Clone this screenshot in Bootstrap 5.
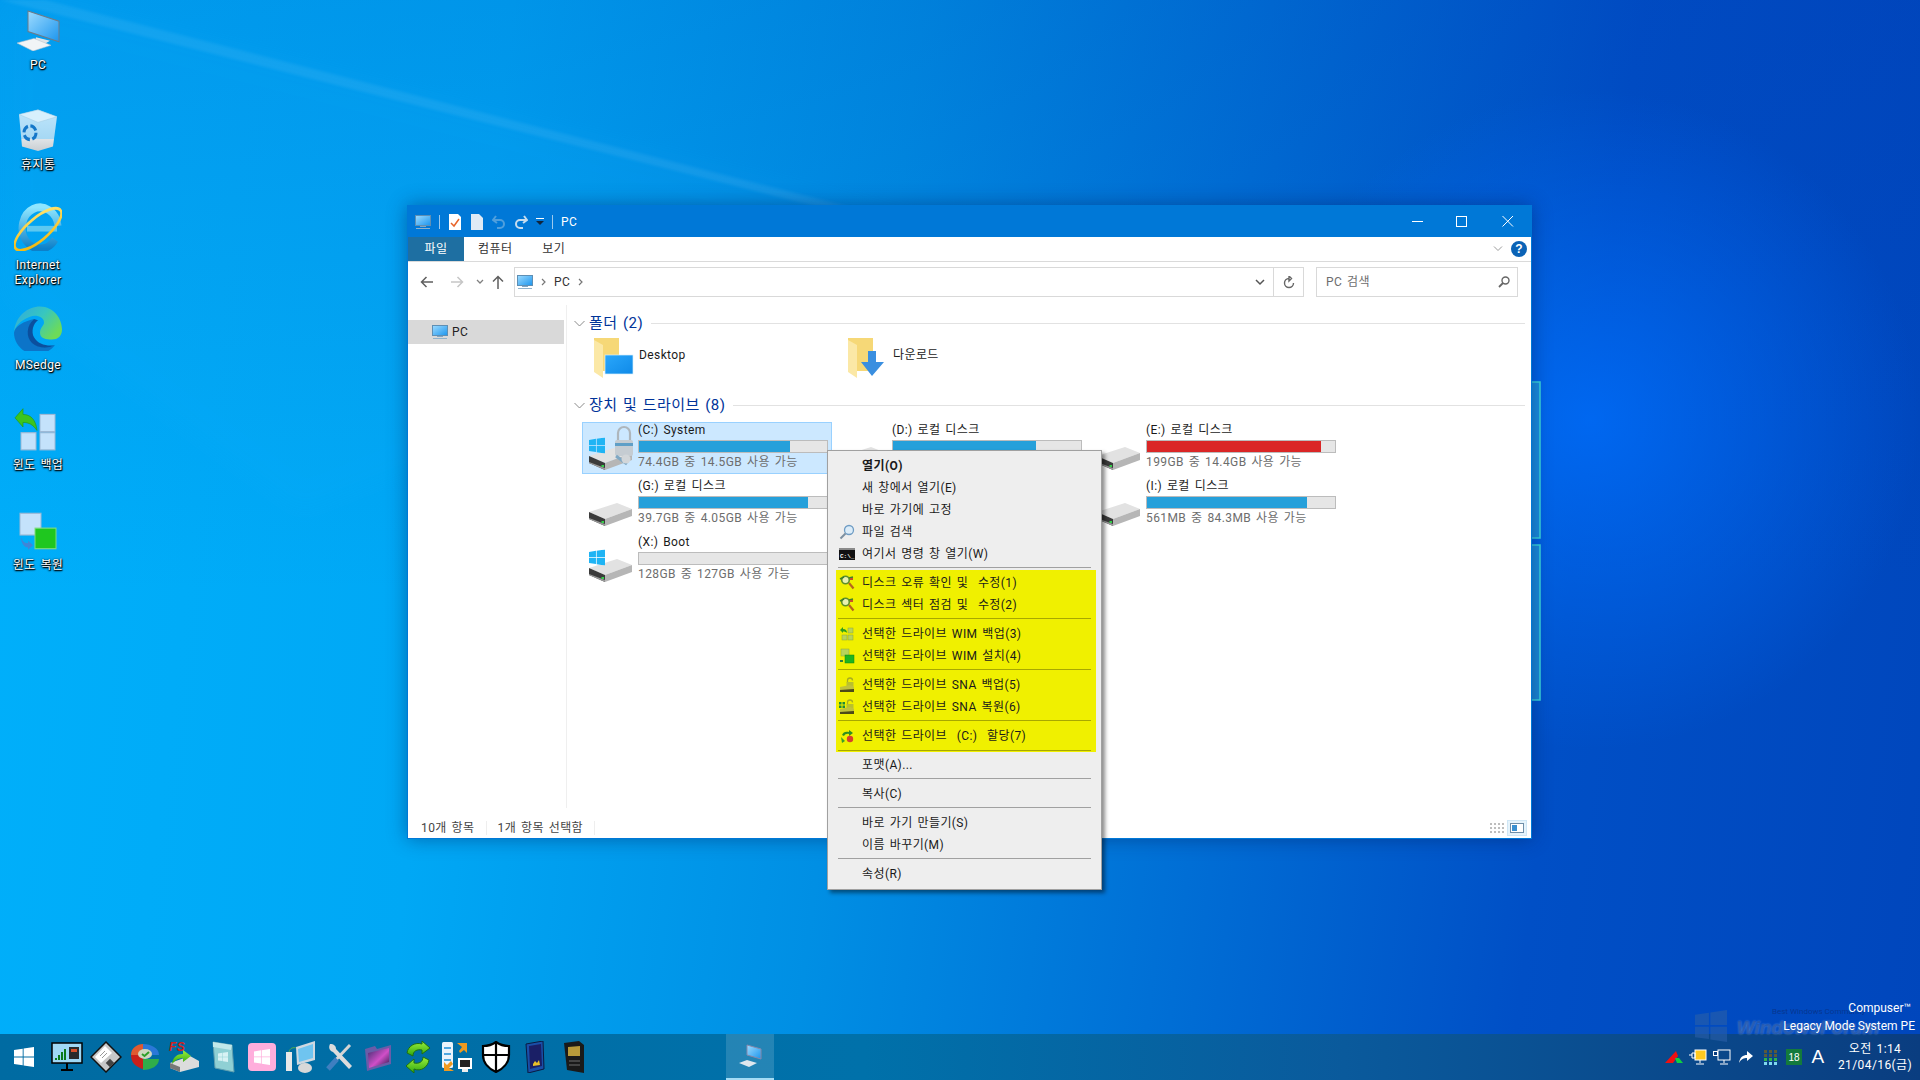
<!DOCTYPE html>
<html lang="ko">
<head>
  <meta charset="UTF-8" />
  <title>PC</title>
  <link href="https://cdn.jsdelivr.net/npm/bootstrap@5.3.3/dist/css/bootstrap.min.css" rel="stylesheet" />
  <style>
    html, body { margin: 0; width: 1920px; height: 1080px; overflow: hidden; }
    body {
      font-family: Roboto, "Noto Sans CJK KR", sans-serif;
      font-size: 12px;
      line-height: 16px;
      letter-spacing: .4px;
      word-spacing: 1.5px;
      color: #1a1a1a;
      background:
        radial-gradient(circle 330px at 1590px 420px, rgba(0,112,255,.75), rgba(0,100,240,0)),
        linear-gradient(180deg, rgba(0,50,170,.16), rgba(0,50,170,0) 55%),
        linear-gradient(97deg, #00b0fb 0%, #00a8f5 25%, #008fe4 45%, #0070d6 62%, #004fc6 80%, #0046bc 100%);
    }
    .svg-defs { position: absolute; width: 0; height: 0; }
    .screen { width: 1920px; height: 1080px; }
    .desk-area { position: relative; }
    .wall-art { position: absolute; left: 0; top: 0; }

    .desk-icons { position: relative; width: 76px; padding-top: 3px; }
    .desk-item { height: 100px; color: #fff; text-align: center; line-height: 15px; text-shadow: 0 1px 2px #000, 1px 1px 1px #000, 0 0 2px rgba(0,0,0,.7); }
    .desk-item svg { display: block; margin: 0 auto 7px; }

    .win-frame { position: absolute; left: 407px; top: 205px; width: 1125px; height: 634px; background: #fff; border: 1px solid #0078d7; border-top: 0; box-shadow: 0 0 18px rgba(0,30,90,.45); }
    .title-bar { height: 32px; background: #0078d7; color: #fff; padding: 1px 0 0 7px; }
    .title-sep { width: 1px; height: 14px; background: #9cc9ee; }
    .win-btn { position: absolute; top: 8px; }
    .ribbon-tabs { height: 25px; border-bottom: 1px solid #dadada; }
    .rtab { height: 24px; line-height: 24px; color: #333; }
    .rtab-file { width: 56px; background: #1e6fa2; color: #fff; text-align: center; }
    .rtab-pc { margin-left: 14px; }
    .rtab-view { margin-left: 30px; }
    .addr-row { height: 43px; padding: 5px 13px 8px 0; }
    .nav-arrows { width: 106px; padding-left: 12px; }
    .addr-box { height: 30px; border: 1px solid #d9d9d9; color: #333; padding-left: 2px; }
    .addr-refresh { width: 30px; height: 100%; border-left: 1px solid #d9d9d9; }
    .search-box { width: 202px; height: 30px; margin-left: 12px; border: 1px solid #d9d9d9; color: #6d6d6d; padding: 0 7px 0 9px; }
    .tree-pane { width: 159px; padding: 15px 2px 0 0; border-right: 1px solid #efefef; margin-bottom: 6px; }
    .tree-row { height: 24px; background: #d9d9d9; padding-left: 24px; color: #222; }
    .list-pane { padding: 6px 6px 0 7px; }
    .grp-head { height: 24px; color: #003399; font-size: 15px; }
    .grp-line { height: 1px; background: #e2e2e2; }
    .tile-grid { display: grid; grid-template-columns: repeat(3, 250px); column-gap: 4px; margin-left: 8px; }
    .folder-grid { height: 58px; padding-top: 3px; }
    .drive-grid { row-gap: 4px; padding-top: 5px; }
    .folder-tile { padding-left: 11px; }
    .folder-tile span { margin: 9px 0 0 4px; }
    .drive-tile { height: 52px; border: 1px solid transparent; padding-left: 4px; }
    .drive-tile.is-sel { background: #cce8ff; border-color: #99d1ff; }
    .drive-text { width: 190px; margin: -1px 0 0 3px; }
    .drive-name { height: 17px; line-height: 17px; margin-bottom: 1px; white-space: nowrap; }
    .drive-sub { color: #6d6d6d; line-height: 16px; margin-top: 1px; white-space: nowrap; }
    .progress.drive-bar { height: 13px; background: #e6e6e6; border: 1px solid #bcbcbc; border-radius: 0; }
    .drive-bar .progress-bar { background: #26a0da; }
    .drive-bar .progress-bar.is-full { background: #da2626; }
    .status-row { height: 24px; color: #444; padding: 3px 4px 0 13px; }
    .status-sep { width: 1px; height: 14px; background: #eee; margin: 0 11px; }
    .view-ico { padding: 2px; border: 1px solid transparent; }
    .view-ico.is-on { background: #e5f3fb; border-color: #cfe6f5; }

    .dropdown-menu.ctx-menu { display: block; position: absolute; left: 827px; top: 450px; width: 275px; min-width: 0; height: 440px; margin: 0; padding: 3px 5px 5px 8px; background: #eeeeee; border: 1px solid #a0a0a0; border-radius: 0; box-shadow: 3px 3px 4px rgba(0,0,0,.45); font-size: 12px; color: #1a1a1a; }
    .ctx-menu .dropdown-item { height: 22px; padding: 1px 0 0 3px; gap: 7px; color: #1a1a1a; }
    .ctx-menu .dropdown-item.no-ico { padding-left: 26px; }
    .ctx-sep { height: 7px; padding: 3px 5px 0 2px; }
    .ctx-sep i { display: block; height: 1px; background: #a0a0a0; }
    .ctx-group { background: #f0f000; margin: -1px 0 1px; padding-top: 1px; }
    .ctx-group .ctx-sep i { background: #a8a800; }
    .ctx-group .ctx-sep:last-child { height: 6px; padding-top: 4px; }

    .water-mark { position: absolute; z-index: 5; left: 1680px; top: 1000px; width: 240px; height: 40px; letter-spacing: 0; word-spacing: 0; }
    .water-txt { position: absolute; right: 5px; color: #fff; white-space: nowrap; }
    .water-top { top: 0; right: 9px; }
    .water-bot { top: 18px; }
    .water-name { position: absolute; left: 57px; top: 17px; font: italic 700 19px "Liberation Sans", sans-serif; color: rgba(25,70,150,.55); white-space: nowrap; text-shadow: 0 0 2px rgba(180,220,255,.45); }
    .water-small { position: absolute; left: 92px; top: 7px; font-size: 8px; line-height: 10px; color: rgba(10,40,110,.6); white-space: nowrap; }
    .water-logo { position: absolute; left: 15px; top: 10px; }

    .task-bar { position: relative; z-index: 1; height: 46px; padding-left: 4px; background: linear-gradient(90deg, #006ba2 0%, #0071aa 45%, #0a5a9c 70%, #0a3d80 100%); }
    .task-btn { width: 39px; height: 46px; }
    .task-start { margin-right: 4px; }
    .task-active { width: 48px; margin-left: 133px; background: rgba(255,255,255,.14); border-bottom: 2px solid #a5dcf5; }
    .tray-ico { width: 24px; height: 46px; color: #fff; }
    .tray-ime { font-size: 19px; font-family: "Liberation Sans", sans-serif; }
    .tray-clock { width: 90px; color: #fff; text-align: center; line-height: 16px; white-space: nowrap; }
  </style>
</head>
<body>
  <svg class="svg-defs">
    <defs>
      <linearGradient id="gScreen" x1="0" y1="0" x2="1" y2="1"><stop offset="0" stop-color="#9fdcff"/><stop offset="1" stop-color="#1b95ee"/></linearGradient>
      <linearGradient id="gBin" x1="0" y1="0" x2="0" y2="1"><stop offset="0" stop-color="#bfe6fb"/><stop offset=".7" stop-color="#a6d8f4"/><stop offset=".72" stop-color="#dfe3e6"/><stop offset="1" stop-color="#c9ced2"/></linearGradient>
      <linearGradient id="gIe" x1="0" y1="0" x2="0" y2="1"><stop offset="0" stop-color="#8fe6ff"/><stop offset="1" stop-color="#0d80c9"/></linearGradient>
      <linearGradient id="gRing" x1="0" y1="1" x2="1" y2="0"><stop offset="0" stop-color="#f4b400"/><stop offset="1" stop-color="#ffe676"/></linearGradient>
      <linearGradient id="gEdge" x1="0" y1="0" x2="1" y2=".6"><stop offset="0" stop-color="#2fa8e0"/><stop offset=".55" stop-color="#37c6c0"/><stop offset="1" stop-color="#6ddb58"/></linearGradient>
      <linearGradient id="gFolderBlue" x1="0" y1="0" x2="1" y2="1"><stop offset="0" stop-color="#2aa7fb"/><stop offset="1" stop-color="#0f8ae8"/></linearGradient>
      <linearGradient id="gPurple" x1="0" y1="0" x2="1" y2="1"><stop offset="0" stop-color="#3c2d6e"/><stop offset=".55" stop-color="#d04fc8"/><stop offset="1" stop-color="#241a46"/></linearGradient>
      <linearGradient id="gGreen" x1="0" y1="0" x2="0" y2="1"><stop offset="0" stop-color="#9cf03c"/><stop offset="1" stop-color="#2fa80f"/></linearGradient>
      <filter id="fBlur"><feGaussianBlur stdDeviation="1.4"/></filter>
      <filter id="fBlur2"><feGaussianBlur stdDeviation="14"/></filter>

      <symbol id="ico-win" viewBox="0 0 20 20"><path d="M0 3 8.7 1.7V9.4H0zM9.6 1.6 20 0V9.4H9.6zM0 10.4H8.7V18.2L0 17zM9.6 10.4H20V20L9.6 18.4z"/></symbol>
      <symbol id="ico-pc" viewBox="0 0 16 16"><rect x=".5" y="1.5" width="15" height="10" fill="url(#gScreen)" stroke="#5f8fb4"/><rect x="5" y="12" width="6" height="1" fill="#7fa6c4"/><rect x="1" y="14" width="14" height="1" fill="#8fb2cc"/></symbol>
      <symbol id="ico-hdd" viewBox="0 0 48 48"><polygon points="2,33 30,24 45,30 18,40" fill="#e2e2e2"/><polygon points="18,40 45,30 45,37 18,47" fill="#b6b6b6"/><polygon points="2,33 18,40 18,47 2,40" fill="#3b3b3b"/><polygon points="2,39 18,45 18,47 2,40" fill="#9a9a9a"/><rect x="14.500" y="42" width="2.500" height="2" fill="#35d04a"/></symbol>
      <symbol id="ico-flag" viewBox="0 0 20 20"><use href="#ico-win" fill="#1fb4f4"/></symbol>
      <symbol id="ico-folder" viewBox="0 0 42 42"><polygon points="1,0 26,0 26,33 1,33" fill="#f6d877"/><polygon points="1,2 10,7 10,40 1,34" fill="#fbe8a6"/></symbol>
      <symbol id="ico-scan" viewBox="0 0 16 16"><circle cx="6.500" cy="5" r="3.800" fill="#e8f0b0" stroke="#5d8f2a" stroke-width="1.600"/><path d="M1 4 5 2M10 3l4-1" stroke="#3d7f2a" stroke-width="1.500"/><path d="M10 8l4.500 5.500" stroke="#b5651d" stroke-width="2.200"/><rect x="11" y="3" width="3" height="2" fill="#c8502a"/></symbol>
      <symbol id="ico-lockhdd" viewBox="0 0 16 16"><path d="M8.500 6V3.500a2.500 2.500 0 0 1 5 0" fill="none" stroke="#a8ad20" stroke-width="1.300"/><rect x="7.500" y="5" width="7" height="4" fill="#b9c12c"/><polygon points="1,10 11,8 15,9.500 15,13 1,15" fill="#c0c23c"/><polygon points="1,13 15,12 15,15 1,15" fill="#4c4a18"/></symbol>
    </defs>
  </svg>

  <div class="screen d-flex flex-column">
    <div class="desk-area flex-grow-1">
      <svg class="wall-art" width="1920" height="1034">
        <polygon points="45,0 880,215 850,215 0,0" fill="#fff" opacity=".07" filter="url(#fBlur)"/>
        <polygon points="0,0 60,0 1000,240 300,520 0,300" fill="#26b8ff" opacity=".06" filter="url(#fBlur2)"/>
        <polygon points="1531,382 1540,382 1540,538 1531,538" fill="#2aa3d8" opacity=".65"/>
        <polygon points="1531,545 1540,545 1540,700 1531,700" fill="#2aa3d8" opacity=".65"/>
        <path d="M1531 382H1540V538H1531M1531 545H1540V700H1531" fill="none" stroke="#39d4dc" stroke-width="1.600"/>
      </svg>

      <div class="desk-icons d-flex flex-column">
        <div class="desk-item">
          <svg width="48" height="48" viewBox="14 3 48 42" preserveAspectRatio="none"><polygon points="28,10 59,19 59,37 28,28" fill="url(#gScreen)" stroke="#6d7b88"/><polygon points="36,33 50,36 44,39 35,36" fill="#dfe5ea"/><polygon points="17,38 34,34 51,40 33,45" fill="#f1f4f6" stroke="#b8c2ca" stroke-width=".5"/></svg>
          PC
        </div>
        <div class="desk-item">
          <svg width="48" height="48" viewBox="14 90 48 42" preserveAspectRatio="none"><polygon points="19,100 38,96 57,102 53,128 38,132 22,128" fill="url(#gBin)"/><polygon points="19,100 38,96 57,102 38,107" fill="#d7f0fd" stroke="#9fcbe3" stroke-width=".5"/><circle cx="30" cy="116" r="6" fill="none" stroke="#1477c9" stroke-width="3" stroke-dasharray="7 2.500"/></svg>
          휴지통
        </div>
        <div class="desk-item">
          <svg width="48" height="48" viewBox="14 177 48 42" preserveAspectRatio="none"><path d="M55 209A18 18 0 1 1 58 197" fill="none" stroke="url(#gIe)" stroke-width="7"/><rect x="27" y="197" width="30" height="5" fill="#5dc8f0"/><ellipse cx="38" cy="200" rx="28" ry="10" transform="rotate(-36 38 200)" fill="none" stroke="url(#gRing)" stroke-width="2.500"/></svg>
          Internet<br />Explorer
        </div>
        <div class="desk-item">
          <svg width="48" height="48" viewBox="14 264 48 42" preserveAspectRatio="none"><path d="M14 290C15 275 28 267 40 267C54 267 62 278 62 287C62 293 58 296 52 296C46 296 40 295 40 290C40 285 44 284 44 281C44 276 36 274 30 276C20 279 15 285 14 290Z" fill="url(#gEdge)"/><path d="M14 290C14 300 24 309 36 309C44 309 50 306 55 301C48 304 38 304 32 298C26 292 28 283 34 278C24 280 15 284 14 290Z" fill="#0c74c8"/><path d="M34 278C26 284 26 294 32 299C38 304 48 304 55 301C46 302 38 300 34 294C31 289 33 282 38 279Z" fill="#0b4f9e"/></svg>
          MSedge
        </div>
        <div class="desk-item">
          <svg width="48" height="48" viewBox="14 351 48 42" preserveAspectRatio="none"><g fill="#c4e2fb" stroke="#9db9d6"><rect x="40" y="361" width="15" height="15"/><rect x="21" y="377" width="15" height="15"/><rect x="40" y="377" width="15" height="15"/></g><path d="M15 364 23 356V361C31 361 36 366 37 375C33 370 29 368 23 368V372Z" fill="#3cc51e" stroke="#1f9a10" stroke-width=".6"/></svg>
          윈도 백업
        </div>
        <div class="desk-item">
          <svg width="48" height="48" viewBox="14 438 48 42" preserveAspectRatio="none"><rect x="20" y="447" width="21" height="19" fill="#c4e2fb" stroke="#9db9d6"/><rect x="35" y="460" width="21" height="18" fill="#1fc71f" stroke="#7fdc7f"/><path d="M21 468C23 473 26 473 28 473V471L33 475 28 479V477C25 477 21 474 21 468Z" fill="#3f86d8"/></svg>
          윈도 복원
        </div>
      </div>

      <div class="water-mark">
        <svg class="water-logo" width="32" height="32" viewBox="0 0 20 20"><use href="#ico-win" width="20" height="20" fill="#2a5fa8" opacity=".6"/></svg>
        <div class="water-small">Best Windows Community</div>
        <div class="water-name">WindowsForum</div>
        <div class="water-txt water-top">Compuser™</div>
        <div class="water-txt water-bot">Legacy Mode System PE</div>
      </div>

      <div class="win-frame d-flex flex-column">
        <div class="title-bar d-flex align-items-center gap-2 flex-shrink-0">
          <svg width="16" height="16"><use href="#ico-pc"/></svg>
          <span class="title-sep"></span>
          <svg width="14" height="16" viewBox="0 0 14 16"><path d="M1 0H10L13 3V16H1z" fill="#fff"/><path d="M3 9 6 12 11 5" fill="none" stroke="#e8642a" stroke-width="1.500"/></svg>
          <svg width="14" height="16" viewBox="0 0 14 16"><path d="M1 0H9L13 4V16H1z" fill="#dfeaf5"/></svg>
          <svg width="14" height="14" viewBox="0 0 14 14"><path d="M4 1 1 5 5 8M1.500 5H8a4 4 0 0 1 0 8H5" fill="none" stroke="#4f9fdd" stroke-width="2"/></svg>
          <svg width="14" height="14" viewBox="0 0 14 14"><path d="M10 1 13 5 9 8M12.500 5H6a4 4 0 0 0 0 8H9" fill="none" stroke="#c6dcee" stroke-width="2"/></svg>
          <svg width="8" height="8" viewBox="0 0 8 8"><rect y="0" width="8" height="1" fill="#fff"/><path d="M0 3H8L4 7z" fill="#10243c"/></svg>
          <span class="title-sep"></span>
          <span>PC</span>
          <svg class="win-btn" style="left:1004px" width="12" height="16" viewBox="0 0 12 16"><rect y="8" width="11" height="1" fill="#fff"/></svg>
          <svg class="win-btn" style="left:1048px" width="12" height="16" viewBox="0 0 12 16"><rect x=".5" y="3.500" width="10" height="10" fill="none" stroke="#fff"/></svg>
          <svg class="win-btn" style="left:1094px" width="12" height="16" viewBox="0 0 12 16"><path d="M.5 3 11 13.500M11 3 .5 13.500" stroke="#fff"/></svg>
        </div>

        <div class="ribbon-tabs d-flex flex-shrink-0 position-relative">
          <div class="rtab rtab-file">파일</div>
          <div class="rtab rtab-pc">컴퓨터</div>
          <div class="rtab rtab-view">보기</div>
          <div class="ms-auto d-flex align-items-center gap-2 pe-1">
            <svg width="10" height="6" viewBox="0 0 10 6"><path d="M1 .5 5 4.500 9 .5" fill="none" stroke="#9a9a9a"/></svg>
            <svg width="16" height="16" viewBox="0 0 16 16"><circle cx="8" cy="8" r="8" fill="#0b63b6"/><text x="8" y="12" text-anchor="middle" font-family="Liberation Sans" font-weight="700" font-size="12" fill="#fff">?</text></svg>
          </div>
        </div>

        <div class="addr-row d-flex flex-shrink-0">
          <div class="nav-arrows d-flex align-items-center">
            <svg width="14" height="12" viewBox="0 0 14 12"><path d="M13 6H2M6.500 1 1.500 6 6.500 11" fill="none" stroke="#5f5f5f" stroke-width="1.500"/></svg>
            <svg class="ms-3" width="14" height="12" viewBox="0 0 14 12"><path d="M1 6H12M7.500 1 12.500 6 7.500 11" fill="none" stroke="#c6c6c6" stroke-width="1.500"/></svg>
            <svg class="ms-2 ps-1" width="12" height="6" viewBox="0 0 8 6"><path d="M1 1 4 4 7 1" fill="none" stroke="#808080" stroke-width="1.300"/></svg>
            <svg class="ms-2" width="12" height="14" viewBox="0 0 12 14"><path d="M6 14V2M1 6.500 6 1.500 11 6.500" fill="none" stroke="#5f5f5f" stroke-width="1.500"/></svg>
          </div>
          <div class="addr-box flex-grow-1 d-flex align-items-center">
            <svg width="16" height="16"><use href="#ico-pc"/></svg>
            <svg class="ms-2" width="5" height="8" viewBox="0 0 5 8"><path d="M1 1 4 4 1 7" fill="none" stroke="#777" stroke-width="1.200"/></svg>
            <span class="ms-2">PC</span>
            <svg class="ms-2" width="5" height="8" viewBox="0 0 5 8"><path d="M1 1 4 4 1 7" fill="none" stroke="#777" stroke-width="1.200"/></svg>
            <svg class="ms-auto me-2" width="10" height="7" viewBox="0 0 10 7"><path d="M1 1 5 5 9 1" fill="none" stroke="#555" stroke-width="1.500"/></svg>
            <div class="addr-refresh d-flex align-items-center justify-content-center">
              <svg width="12" height="13" viewBox="0 0 12 13"><path d="M6 2.500A4.500 4.500 0 1 0 10.500 7M6 0V5L8.500 2.500z" fill="none" stroke="#666" stroke-width="1.400"/></svg>
            </div>
          </div>
          <div class="search-box d-flex align-items-center justify-content-between">
            <span>PC 검색</span>
            <svg width="12" height="12" viewBox="0 0 12 12"><circle cx="7.500" cy="4.500" r="3.500" fill="none" stroke="#666" stroke-width="1.400"/><path d="M5 7 1 11" stroke="#666" stroke-width="1.800"/></svg>
          </div>
        </div>

        <div class="flex-grow-1 d-flex">
          <div class="tree-pane flex-shrink-0">
            <div class="tree-row d-flex align-items-center gap-1">
              <svg width="16" height="16"><use href="#ico-pc"/></svg><span>PC</span>
            </div>
          </div>
          <div class="list-pane flex-grow-1">
            <div class="grp-head d-flex align-items-center">
              <svg width="11" height="7" viewBox="0 0 11 7"><path d="M.5 1 5.500 6 10.500 1" fill="none" stroke="#8a8a8a"/></svg>
              <span class="ms-1 me-2">폴더 (2)</span>
              <div class="grp-line flex-grow-1"></div>
            </div>
            <div class="tile-grid folder-grid">
              <div class="folder-tile d-flex">
                <svg width="42" height="42" viewBox="0 0 42 42"><use href="#ico-folder" width="42" height="42"/><rect x="12" y="17" width="28" height="19" fill="url(#gFolderBlue)" stroke="#d8effc" stroke-width=".7"/></svg>
                <span>Desktop</span>
              </div>
              <div class="folder-tile d-flex">
                <svg width="42" height="42" viewBox="0 0 42 42"><use href="#ico-folder" width="42" height="42"/><path d="M21 13H29V24H37L25 38 14 24H21z" fill="#3a8fe0"/></svg>
                <span>다운로드</span>
              </div>
            </div>

            <div class="grp-head d-flex align-items-center">
              <svg width="11" height="7" viewBox="0 0 11 7"><path d="M.5 1 5.500 6 10.500 1" fill="none" stroke="#8a8a8a"/></svg>
              <span class="ms-1 me-2">장치 및 드라이브 (8)</span>
              <div class="grp-line flex-grow-1"></div>
            </div>
            <div class="tile-grid drive-grid">
              <div class="drive-tile is-sel d-flex">
                <svg width="48" height="48" viewBox="0 0 48 48"><use href="#ico-hdd" width="48" height="48"/><use href="#ico-flag" x="2" y="14" width="16" height="17"/><path d="M31 20V10a6 6 0 0 1 12 0V20" fill="none" stroke="#aeb6bc" stroke-width="2.200"/><rect x="28" y="17" width="18" height="16" rx="2" fill="#c5ccd2"/><rect x="28" y="20" width="18" height="3" fill="#5f9fc7"/><path d="M29 33 40 41" stroke="#7fa8c4" stroke-width="3"/><circle cx="39" cy="36" r="4.500" fill="#d2d6d9"/></svg>
                <div class="drive-text">
                  <div class="drive-name">(C:) System</div>
                  <div class="progress drive-bar"><div class="progress-bar" style="width:80.5%"></div></div>
                  <div class="drive-sub">74.4GB 중 14.5GB 사용 가능</div>
                </div>
              </div>
              <div class="drive-tile d-flex">
                <svg width="48" height="48"><use href="#ico-hdd" width="48" height="48"/></svg>
                <div class="drive-text">
                  <div class="drive-name">(D:) 로컬 디스크</div>
                  <div class="progress drive-bar"><div class="progress-bar" style="width:76%"></div></div>
                </div>
              </div>
              <div class="drive-tile d-flex">
                <svg width="48" height="48"><use href="#ico-hdd" width="48" height="48"/></svg>
                <div class="drive-text">
                  <div class="drive-name">(E:) 로컬 디스크</div>
                  <div class="progress drive-bar"><div class="progress-bar is-full" style="width:92.8%"></div></div>
                  <div class="drive-sub">199GB 중 14.4GB 사용 가능</div>
                </div>
              </div>
              <div class="drive-tile d-flex">
                <svg width="48" height="48"><use href="#ico-hdd" width="48" height="48"/></svg>
                <div class="drive-text">
                  <div class="drive-name">(G:) 로컬 디스크</div>
                  <div class="progress drive-bar"><div class="progress-bar" style="width:89.8%"></div></div>
                  <div class="drive-sub">39.7GB 중 4.05GB 사용 가능</div>
                </div>
              </div>
              <div class="drive-tile d-flex">
                <svg width="48" height="48"><use href="#ico-hdd" width="48" height="48"/></svg>
              </div>
              <div class="drive-tile d-flex">
                <svg width="48" height="48"><use href="#ico-hdd" width="48" height="48"/></svg>
                <div class="drive-text">
                  <div class="drive-name">(I:) 로컬 디스크</div>
                  <div class="progress drive-bar"><div class="progress-bar" style="width:85%"></div></div>
                  <div class="drive-sub">561MB 중 84.3MB 사용 가능</div>
                </div>
              </div>
              <div class="drive-tile d-flex">
                <svg width="48" height="48" viewBox="0 0 48 48"><use href="#ico-hdd" width="48" height="48"/><use href="#ico-flag" x="2" y="14" width="16" height="17"/></svg>
                <div class="drive-text">
                  <div class="drive-name">(X:) Boot</div>
                  <div class="progress drive-bar"></div>
                  <div class="drive-sub">128GB 중 127GB 사용 가능</div>
                </div>
              </div>
            </div>
          </div>
        </div>

        <div class="status-row d-flex align-items-center flex-shrink-0">
          <span>10개 항목</span><span class="status-sep"></span>
          <span>1개 항목 선택함</span><span class="status-sep"></span>
          <div class="ms-auto d-flex align-items-center">
            <span class="view-ico d-flex"><svg width="14" height="10" viewBox="0 0 14 10"><path d="M0 1H2M4 1H6M8 1H10M12 1H14M0 5H2M4 5H6M8 5H10M12 5H14M0 9H2M4 9H6M8 9H10M12 9H14" stroke="#7c7c7c"/></svg></span>
            <span class="view-ico is-on d-flex"><svg width="14" height="10" viewBox="0 0 14 10"><rect x=".5" y=".5" width="13" height="9" fill="#fff" stroke="#6f8ea8"/><rect x="2" y="2" width="5" height="6" fill="#3a8fd0"/></svg></span>
          </div>
        </div>
      </div>

      <div class="dropdown-menu show ctx-menu">
        <a class="dropdown-item no-ico d-flex align-items-center fw-bold">열기(O)</a>
        <a class="dropdown-item no-ico d-flex align-items-center">새 창에서 열기(E)</a>
        <a class="dropdown-item no-ico d-flex align-items-center">바로 가기에 고정</a>
        <a class="dropdown-item d-flex align-items-center">
          <svg width="16" height="16" viewBox="0 0 16 16"><circle cx="10" cy="6" r="4.500" fill="#dcecf8" stroke="#6e9cc4" stroke-width="1.300"/><path d="M6.500 9.500 1.500 14.500" stroke="#7d8fa0" stroke-width="2"/></svg>
          <span>파일 검색</span>
        </a>
        <a class="dropdown-item d-flex align-items-center">
          <svg width="16" height="16" viewBox="0 0 16 16"><rect y="2" width="16" height="12" fill="#111"/><rect y="2" width="16" height="2" fill="#8a8a8a"/><text x="1" y="12" font-family="Liberation Mono" font-size="6" font-weight="700" letter-spacing="0" fill="#fff">C:\_</text></svg>
          <span>여기서 명령 창 열기(W)</span>
        </a>
        <div class="ctx-sep"><i></i></div>
        <div class="ctx-group">
          <a class="dropdown-item d-flex align-items-center"><svg width="16" height="16"><use href="#ico-scan"/></svg><span>디스크 오류 확인 및&nbsp; 수정(1)</span></a>
          <a class="dropdown-item d-flex align-items-center"><svg width="16" height="16"><use href="#ico-scan"/></svg><span>디스크 섹터 점검 및&nbsp; 수정(2)</span></a>
          <div class="ctx-sep"><i></i></div>
          <a class="dropdown-item d-flex align-items-center">
            <svg width="16" height="16" viewBox="0 0 16 16"><g fill="#b8d45a" stroke="#8aa53a" stroke-width=".5"><rect x="9" y="2" width="5" height="5"/><rect x="3" y="9" width="5" height="5"/><rect x="9" y="9" width="5" height="5"/></g><path d="M1 4 4 1V3C7 3 8 5 8 7C7 6 6 5.500 4 5.500V7z" fill="#2f9f1f"/></svg>
            <span>선택한 드라이브 WIM 백업(3)</span>
          </a>
          <a class="dropdown-item d-flex align-items-center">
            <svg width="16" height="16" viewBox="0 0 16 16"><rect x="2" y="1" width="8" height="7" fill="#b8d45a" stroke="#8aa53a" stroke-width=".5"/><rect x="6" y="7" width="9" height="8" fill="#1fb51f" stroke="#0f8a0f" stroke-width=".5"/><rect x="1" y="12" width="3" height="2" fill="#2f7f3f"/></svg>
            <span>선택한 드라이브 WIM 설치(4)</span>
          </a>
          <div class="ctx-sep"><i></i></div>
          <a class="dropdown-item d-flex align-items-center"><svg width="16" height="16"><use href="#ico-lockhdd"/></svg><span>선택한 드라이브 SNA 백업(5)</span></a>
          <a class="dropdown-item d-flex align-items-center">
            <svg width="16" height="16" viewBox="0 0 16 16"><use href="#ico-lockhdd" width="16" height="16"/><g fill="#1f8a3a"><rect x="0" y="3" width="2.500" height="2.500"/><rect x="3.500" y="3" width="2.500" height="2.500"/><rect x="0" y="6.500" width="2.500" height="2.500"/><rect x="3.500" y="6.500" width="2.500" height="2.500"/></g></svg>
            <span>선택한 드라이브 SNA 복원(6)</span>
          </a>
          <div class="ctx-sep"><i></i></div>
          <a class="dropdown-item d-flex align-items-center">
            <svg width="16" height="16" viewBox="0 0 16 16"><path d="M3 7C4 4 7 3 10 4V2L14 5 10 8V6C8 5.500 6 6 5 8z" fill="#2f8f1f"/><circle cx="11" cy="11" r="3.200" fill="#d8402a"/><path d="M2 9 6 13 3 15z" fill="#3a9f2a"/></svg>
            <span>선택한 드라이브&nbsp; (C:)&nbsp; 할당(7)</span>
          </a>
          <div class="ctx-sep"><i></i></div>
        </div>
        <a class="dropdown-item no-ico d-flex align-items-center">포맷(A)...</a>
        <div class="ctx-sep"><i></i></div>
        <a class="dropdown-item no-ico d-flex align-items-center">복사(C)</a>
        <div class="ctx-sep"><i></i></div>
        <a class="dropdown-item no-ico d-flex align-items-center">바로 가기 만들기(S)</a>
        <a class="dropdown-item no-ico d-flex align-items-center">이름 바꾸기(M)</a>
        <div class="ctx-sep"><i></i></div>
        <a class="dropdown-item no-ico d-flex align-items-center">속성(R)</a>
      </div>
    </div>

    <div class="task-bar d-flex flex-shrink-0">
      <div class="task-btn task-start d-flex align-items-center justify-content-center"><svg width="20" height="20" fill="#fff"><use href="#ico-win"/></svg></div>
      <div class="task-btn d-flex align-items-center justify-content-center">
        <svg width="32" height="32" viewBox="0 0 32 32"><rect x="1" y="2" width="30" height="20" fill="#9fd8f5" stroke="#000" stroke-width="1.500"/><path d="M5 19V17M8 19V14M11 19V11M14 19V8" stroke="#0a7a1a" stroke-width="2"/><rect x="18" y="6" width="10" height="12" fill="#2a2a2a"/><rect x="20" y="8" width="6" height="3" fill="#d8502a"/><path d="M16 22V28M10 29H22" stroke="#000" stroke-width="2"/></svg>
      </div>
      <div class="task-btn d-flex align-items-center justify-content-center">
        <svg width="32" height="32" viewBox="0 0 32 32"><polygon points="16,1 31,16 16,31 1,16" fill="#c8c8c8" stroke="#111" stroke-width="1.500"/><polygon points="15,5 22,12 11,22 5,16" fill="#fff"/><path d="M10 15 15 10M12 17 17 12" stroke="#999"/><rect x="17" y="19" width="6" height="6" transform="rotate(45 20 22)" fill="#444"/></svg>
      </div>
      <div class="task-btn d-flex align-items-center justify-content-center">
        <svg width="32" height="32" viewBox="0 0 32 32"><path d="M2 14C2 7 8 3 14 3V14z" fill="#e05a30"/><path d="M14 3C22 3 30 7 30 14H14z" fill="#2a78d8"/><path d="M2 14H14V28C7 26 2 22 2 14z" fill="#c8201a"/><path d="M14 18H30C30 25 22 29 14 29z" fill="#2fae4a"/><ellipse cx="16" cy="13" rx="7" ry="5" fill="#cfd8c0"/><path d="M13 13 15.500 15 20 11" fill="none" stroke="#2f9f2a" stroke-width="2"/></svg>
      </div>
      <div class="task-btn d-flex align-items-center justify-content-center">
        <svg width="32" height="32" viewBox="0 0 32 32"><text x="1" y="10" font-family="Liberation Sans" font-weight="700" font-style="italic" font-size="12" fill="#d6201a">FS</text><polygon points="2,22 22,15 31,20 31,26 12,31 2,27" fill="#dcdcdc"/><polygon points="2,22 12,26 12,31 2,27" fill="#777"/><path d="M4 23C5 16 9 13 15 13V9L23 15 15 21V17C11 17 7 19 4 23z" fill="url(#gGreen)"/></svg>
      </div>
      <div class="task-btn d-flex align-items-center justify-content-center">
        <svg width="32" height="32" viewBox="0 0 32 32"><polygon points="6,1 25,4 27,31 8,27" fill="#8fd0d4" stroke="#5f9fb0"/><polygon points="6,1 25,4 24,9 6,6" fill="#c0e8ea"/><use href="#ico-win" x="11" y="11" width="10" height="10" fill="#d8f2f4"/></svg>
      </div>
      <div class="task-btn d-flex align-items-center justify-content-center">
        <svg width="30" height="30" viewBox="0 0 30 30"><rect width="28" height="28" x="1" y="1" rx="4" fill="#ffaedc"/><use href="#ico-win" x="7" y="7" width="16" height="16" fill="#fff"/></svg>
      </div>
      <div class="task-btn d-flex align-items-center justify-content-center">
        <svg width="32" height="32" viewBox="0 0 32 32"><rect x="1" y="11" width="6" height="19" fill="#e8e8e8"/><path d="M4 11C5 7 8 6 12 7" fill="none" stroke="#4fb04a"/><polygon points="11,6 30,0 30,19 12,24" fill="#cfd8e0"/><polygon points="13,8 28,3 28,17 14,21" fill="#6fc4f0"/><ellipse cx="20" cy="27" rx="7" ry="5" fill="#d8d8d8"/></svg>
      </div>
      <div class="task-btn d-flex align-items-center justify-content-center">
        <svg width="30" height="30" viewBox="0 0 30 30"><path d="M25 3 5 24" stroke="#d4d4d4" stroke-width="3"/><path d="M3 27 12 17" stroke="#3f7fc0" stroke-width="5"/><path d="M5 2C3 6 5 9 8 10L24 27 27 24 11 7C11 4 9 2 5 2z" fill="#dcdcdc"/></svg>
      </div>
      <div class="task-btn d-flex align-items-center justify-content-center">
        <svg width="32" height="32" viewBox="0 0 32 32"><polygon points="2,8 12,5 14,8 28,4 28,23 4,30" fill="#6a5ca8"/><polygon points="5,12 26,7 26,21 6,27" fill="url(#gPurple)"/></svg>
      </div>
      <div class="task-btn d-flex align-items-center justify-content-center">
        <svg width="32" height="32" viewBox="0 0 32 32"><path d="M5 12C6 5 13 1 20 3V0L28 7 20 13V9C15 8 11 10 11 15z" fill="url(#gGreen)" stroke="#1f6f10"/><path d="M27 19C26 26 19 31 12 28V32L4 25 12 18V22C17 23 21 21 21 16z" fill="url(#gGreen)" stroke="#1f6f10"/></svg>
      </div>
      <div class="task-btn d-flex align-items-center justify-content-center">
        <svg width="32" height="32" viewBox="0 0 32 32"><rect x="1" y="1" width="11" height="26" rx="1.500" fill="#eaf4fb"/><path d="M3 7H10M3 13H10M3 19H10" stroke="#4fa8e0" stroke-width="2"/><rect x="17" y="17" width="14" height="11" fill="#fff"/><rect x="19" y="19" width="10" height="7" fill="#222"/><rect x="21" y="28" width="6" height="3" fill="#eee"/><path d="M16 2H26V12L23 9 19 12 18 10 21 6z" fill="#ef9a1f"/><path d="M13 30H3V21L6 24 10 20 12 23 8 27z" fill="#ef9a1f"/></svg>
      </div>
      <div class="task-btn d-flex align-items-center justify-content-center">
        <svg width="30" height="32" viewBox="0 0 30 32"><path d="M15 1C19 4 24 5 28 5V14C28 22 22 28 15 31C8 28 2 22 2 14V5C6 5 11 4 15 1z" fill="#fff" stroke="#000" stroke-width="2.200"/><path d="M15 2V30M2 14H28" stroke="#000" stroke-width="2.200"/></svg>
      </div>
      <div class="task-btn d-flex align-items-center justify-content-center">
        <svg width="20" height="32" viewBox="0 0 20 32"><polygon points="1,3 18,0 19,28 3,32" fill="#1a4fa8" stroke="#0a1a40"/><polygon points="4,5 16,3 17,25 5,28" fill="#1a1f66"/><path d="M8 23 10 20 12 22 14 19 15 24 8 25z" fill="#e8c02a"/></svg>
      </div>
      <div class="task-btn d-flex align-items-center justify-content-center">
        <svg width="22" height="32" viewBox="0 0 22 32"><polygon points="1,2 16,0 21,4 21,32 4,29" fill="#1a1a1a"/><polygon points="5,6 17,5 17,15 5,15" fill="#b89a3a"/><path d="M6 20H17M6 24H17" stroke="#444" stroke-width="2"/></svg>
      </div>
      <div class="task-btn task-active d-flex align-items-center justify-content-center">
        <svg width="26" height="26" viewBox="0 0 26 26"><polygon points="10,2 24,6 24,16 10,12" fill="url(#gScreen)" stroke="#88a"/><polygon points="2,20 10,17 20,20 12,24" fill="#dfe7ee"/></svg>
      </div>

      <div class="ms-auto d-flex align-items-center">
        <div class="tray-ico d-flex align-items-center justify-content-center">
          <svg width="18" height="14" viewBox="0 0 18 14"><polygon points="0,13 11,1 13,6 8,13" fill="#f01010"/><polygon points="10,8 14,8 18,13 12,13" fill="#10d040"/></svg>
        </div>
        <div class="tray-ico d-flex align-items-center justify-content-center">
          <svg width="18" height="16" viewBox="0 0 18 16"><rect x="6" y="1" width="11" height="10" fill="#ffc91f" stroke="#fff"/><path d="M11 11V14M7 15H15" stroke="#fff"/><path d="M0 6H3M3 4H6V9H3z" fill="none" stroke="#fff"/></svg>
        </div>
        <div class="tray-ico d-flex align-items-center justify-content-center">
          <svg width="18" height="16" viewBox="0 0 18 16"><rect x="5" y="1" width="12" height="10" fill="none" stroke="#fff"/><path d="M11 11V14M7 15H15" stroke="#fff"/><rect x=".5" y="2.500" width="4" height="4" fill="#0a3d80" stroke="#fff"/></svg>
        </div>
        <div class="tray-ico d-flex align-items-center justify-content-center">
          <svg width="16" height="14" viewBox="0 0 16 14"><path d="M1 13C2 7 5 5 9 5V1L15 6 9 11V8C6 8 3 9 1 13z" fill="#fff"/></svg>
        </div>
        <div class="tray-ico d-flex align-items-center justify-content-center">
          <svg width="13" height="15" viewBox="0 0 13 15"><g fill="#5a5a3a"><rect width="3" height="3"/><rect x="5" width="3" height="3"/><rect x="10" width="3" height="3"/><rect y="4" width="3" height="3"/><rect x="5" y="4" width="3" height="3"/><rect x="10" y="4" width="3" height="3"/></g><g fill="#2fb04a"><rect y="8" width="3" height="3"/><rect x="5" y="8" width="3" height="3"/><rect x="10" y="8" width="3" height="3"/></g><g fill="#7fd8f0"><rect y="12" width="3" height="3"/><rect x="5" y="12" width="3" height="3"/><rect x="10" y="12" width="3" height="3"/></g></svg>
        </div>
        <div class="tray-ico d-flex align-items-center justify-content-center">
          <svg width="16" height="16" viewBox="0 0 16 16"><rect width="16" height="16" fill="#137a3c"/><text x="8" y="12" text-anchor="middle" font-family="Liberation Sans" font-size="10" letter-spacing="0" fill="#fff">18</text></svg>
        </div>
        <div class="tray-ico tray-ime d-flex align-items-center justify-content-center">A</div>
        <div class="tray-clock">오전 1:14<br />21/04/16(금)</div>
      </div>
    </div>
  </div>
</body>
</html>
